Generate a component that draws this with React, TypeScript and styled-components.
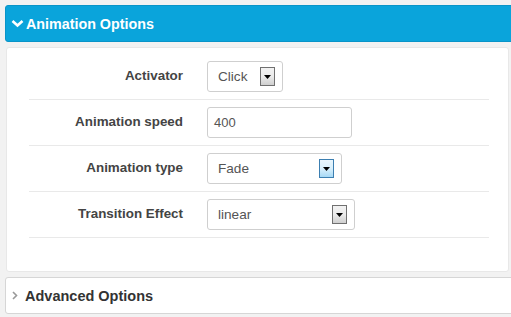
import React from 'react'
import styled, { createGlobalStyle } from 'styled-components'

const GlobalStyle = createGlobalStyle`
  html, body {
    margin: 0;
    padding: 0;
    background: #f2f2f2;
    font-family: Arial, "Liberation Sans", sans-serif;
  }
`

const StyledPage = styled.div`
  width: 511px;
  height: 317px;
  overflow: hidden;
  box-sizing: border-box;
  padding: 5px 0 0 5px;
  display: flex;
  flex-direction: column;
`

const StyledHeader = styled.div`
  height: 37px;
  width: calc(100% + 6px);
  box-sizing: border-box;
  background: #0aa4db;
  border: 1px solid #0994c8;
  border-radius: 3px;
  display: flex;
  align-items: center;
  gap: 2px;
  padding-left: 5px;
  color: #fff;
  font-weight: bold;
  font-size: 14.3px;
`

const StyledBody = styled.div`
  margin: 5px 2px 0 1px;
  background: #fff;
  border: 1px solid #e8e8e8;
  border-radius: 3px;
  padding: 6px 19px 33px 22px;
`

const StyledRow = styled.div`
  display: grid;
  grid-template-columns: 154px auto;
  column-gap: 24px;
  align-items: center;
  padding: 7px 0;
  border-bottom: 1px solid #e9e9e9;
`

const StyledLabel = styled.div`
  text-align: right;
  font-size: 13.4px;
  font-weight: bold;
  color: #444;
  padding-bottom: 3px;
`

const StyledField = styled.div<{ $width: number }>`
  width: ${p => p.$width}px;
  height: 31px;
  box-sizing: border-box;
  border: 1px solid #cfcfcf;
  border-radius: 3px;
  background: #fff;
  display: flex;
  align-items: center;
  justify-content: space-between;
  padding: 0 7px 0 10px;
  font-size: 13.6px;
  color: #555;
`

const StyledInput = styled(StyledField)`
  padding-left: 6px;
  font-size: 13px;
`

const StyledArrowBox = styled.div<{ $active?: boolean }>`
  width: 15px;
  height: 19px;
  box-sizing: border-box;
  border: 1px solid ${p => (p.$active ? '#3c7fb1' : '#707070')};
  background: ${p =>
    p.$active
      ? 'linear-gradient(#eaf6fd, #d9f0fc 50%, #a7d9f5)'
      : 'linear-gradient(#f2f2f2, #ebebeb 50%, #cfcfcf)'};
  display: flex;
  align-items: center;
  justify-content: center;
`

const StyledPanel = styled.div`
  margin-top: 5px;
  height: 37px;
  width: calc(100% + 6px);
  box-sizing: border-box;
  background: #fff;
  border: 1px solid #d6d6d6;
  border-radius: 3px;
  display: flex;
  align-items: center;
  gap: 7px;
  padding-left: 6px;
  color: #333;
  font-weight: bold;
  font-size: 14.5px;
`

function Arrow () {
  return (
    <svg width='7' height='4' viewBox='0 0 7 4'>
      <polygon points='0,0 7,0 3.5,4' fill='#000' />
    </svg>
  )
}

function Select ({ value, width, active }: { value: string; width: number; active?: boolean }) {
  return (
    <StyledField $width={width}>
      <span>{value}</span>
      <StyledArrowBox $active={active}>
        <Arrow />
      </StyledArrowBox>
    </StyledField>
  )
}

export default function App () {
  return (
    <>
      <GlobalStyle />
      <StyledPage>
        <StyledHeader>
          <svg width='13' height='9' viewBox='0 0 13 9'>
            <polyline points='1.5,2 6.5,6.5 11.5,2' fill='none' stroke='#fff' strokeWidth='2.6' />
          </svg>
          Animation Options
        </StyledHeader>
        <StyledBody>
          <StyledRow>
            <StyledLabel>Activator</StyledLabel>
            <Select value='Click' width={76} />
          </StyledRow>
          <StyledRow>
            <StyledLabel>Animation speed</StyledLabel>
            <StyledInput $width={145}>400</StyledInput>
          </StyledRow>
          <StyledRow>
            <StyledLabel>Animation type</StyledLabel>
            <Select value='Fade' width={135} active />
          </StyledRow>
          <StyledRow>
            <StyledLabel>Transition Effect</StyledLabel>
            <Select value='linear' width={148} />
          </StyledRow>
        </StyledBody>
        <StyledPanel>
          <svg width='6' height='9' viewBox='0 0 6 9'>
            <polyline points='1,1 4.5,4.5 1,8' fill='none' stroke='#999' strokeWidth='1.6' />
          </svg>
          Advanced Options
        </StyledPanel>
      </StyledPage>
    </>
  )
}
